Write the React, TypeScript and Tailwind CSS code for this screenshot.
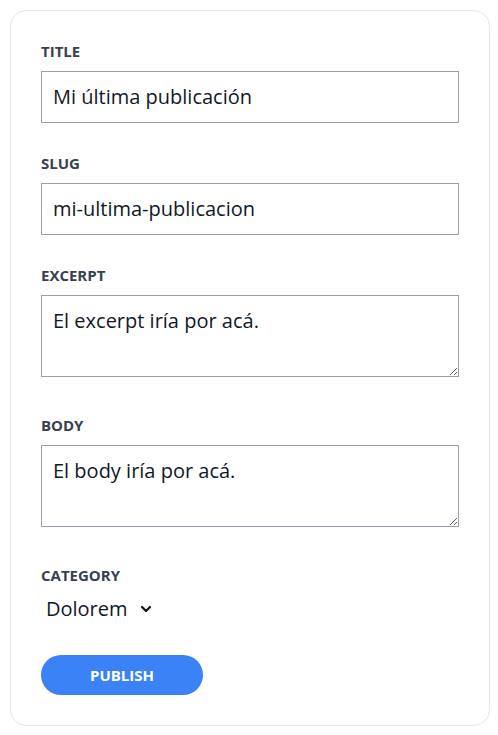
import React from 'react';

const labelCls = 'block text-[15px] leading-5 font-bold uppercase text-[#374151] mb-2.5';
const inputCls =
  'block w-full border border-gray-400 px-[11px] py-[11px] text-xl leading-7 text-gray-900 outline-none';

export default function App() {
  return (
    <div className="pl-2.5 py-2.5 bg-white min-h-screen" style={{ fontFamily: '"Open Sans", "Noto Sans", sans-serif' }}>
      <form className="w-[480px] border border-gray-200 rounded-2xl px-[30px] pt-[30px] pb-[30px]">
        {/* title */}
        <div className="mb-[30px]">
          <label className={labelCls}>Title</label>
          <input className={inputCls} defaultValue="Mi última publicación" />
        </div>

        {/* slug */}
        <div className="mb-[30px]">
          <label className={labelCls}>Slug</label>
          <input className={inputCls} defaultValue="mi-ultima-publicacion" />
        </div>

        {/* excerpt */}
        <div className="mb-[38px]">
          <label className={labelCls}>Excerpt</label>
          <textarea
            className="block w-full h-[82px] border border-gray-400 px-[11px] py-[11px] text-xl leading-7 text-gray-900 outline-none"
            defaultValue="El excerpt iría por acá."
          />
        </div>

        {/* body */}
        <div className="mb-[38px]">
          <label className={labelCls}>Body</label>
          <textarea
            className="block w-full h-[82px] border border-gray-400 px-[11px] py-[11px] text-xl leading-7 text-gray-900 outline-none"
            defaultValue="El body iría por acá."
          />
        </div>

        {/* category */}
        <div className="mb-[32px]">
          <label className={labelCls}>Category</label>
          <div className="relative inline-flex items-center">
            <select className="appearance-none bg-transparent pl-[5px] pr-8 text-xl leading-7 text-gray-900 outline-none">
              <option>Dolorem</option>
            </select>
            <svg
              className="absolute right-[8px] pointer-events-none"
              width="12"
              height="12"
              viewBox="0 0 12 12"
              fill="none"
              stroke="#111"
              strokeWidth="2.2"
              strokeLinecap="round"
              strokeLinejoin="round"
            >
              <path d="M2 4l4 4 4-4" />
            </svg>
          </div>
        </div>

        <button
          type="button"
          className="w-[162px] h-10 rounded-full bg-[#3b82f6] text-white text-[15px] font-bold uppercase"
        >
          Publish
        </button>
      </form>
    </div>
  );
}
